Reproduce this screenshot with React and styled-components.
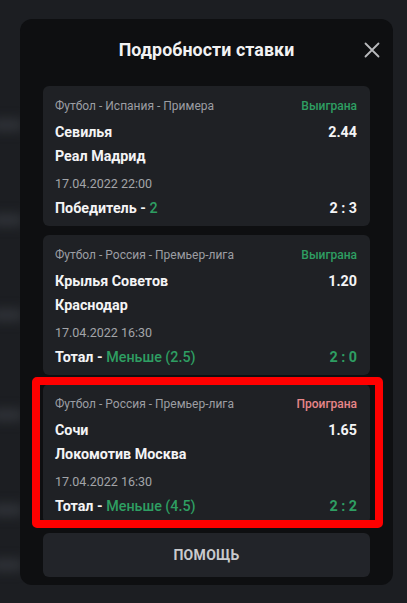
import React from "react";
import styled, { createGlobalStyle } from "styled-components";

const bets = [
  {
    league: "Футбол - Испания - Примера",
    status: "Выиграна",
    won: true,
    home: "Севилья",
    away: "Реал Мадрид",
    odds: "2.44",
    date: "17.04.2022 22:00",
    market: "Победитель",
    pick: "2",
    score: "2 : 3",
    scoreGreen: false,
  },
  {
    league: "Футбол - Россия - Премьер-лига",
    status: "Выиграна",
    won: true,
    home: "Крылья Советов",
    away: "Краснодар",
    odds: "1.20",
    date: "17.04.2022 16:30",
    market: "Тотал",
    pick: "Меньше (2.5)",
    score: "2 : 0",
    scoreGreen: true,
  },
  {
    league: "Футбол - Россия - Премьер-лига",
    status: "Проиграна",
    won: false,
    home: "Сочи",
    away: "Локомотив Москва",
    odds: "1.65",
    date: "17.04.2022 16:30",
    market: "Тотал",
    pick: "Меньше (4.5)",
    score: "2 : 2",
    scoreGreen: true,
    marked: true,
  },
];

const backdropRows = [120, 215, 310, 410, 505, 560];

function App() {
  return (
    <>
      <GlobalStyle />
      <Page>
        <Backdrop>
          {backdropRows.map((y) => (
            <Smudge key={y} style={{ top: y }} />
          ))}
        </Backdrop>
        <Modal>
          <Header>
            <Title>Подробности ставки</Title>
            <CloseButton aria-label="close">
              <svg width="16" height="16" viewBox="0 0 16 16">
                <path d="M1.5 1.5 L14.5 14.5 M14.5 1.5 L1.5 14.5" stroke="#b9babd" strokeWidth="1.8" strokeLinecap="round" />
              </svg>
            </CloseButton>
          </Header>
          <List>
            {bets.map((b, i) => (
              <Card key={i} $marked={b.marked}>
                <Row $h={26}>
                  <League>{b.league}</League>
                  <Status $won={b.won}>{b.status}</Status>
                </Row>
                <Row $h={26}>
                  <Strong>{b.home}</Strong>
                  <Strong>{b.odds}</Strong>
                </Row>
                <Row $h={22}>
                  <Strong>{b.away}</Strong>
                </Row>
                <Row $h={32}>
                  <DateText>{b.date}</DateText>
                </Row>
                <Row $h={18}>
                  <Strong>
                    {b.market} - <Green>{b.pick}</Green>
                  </Strong>
                  <Strong $green={b.scoreGreen}>{b.score}</Strong>
                </Row>
              </Card>
            ))}
            <HelpButton>ПОМОЩЬ</HelpButton>
          </List>
        </Modal>
      </Page>
    </>
  );
}

export default App;

const GlobalStyle = createGlobalStyle`
  html, body {
    margin: 0;
    padding: 0;
    background: #1c1e22;
  }
  body {
    font-family: Roboto, "Noto Sans", sans-serif;
    -webkit-font-smoothing: antialiased;
  }
`;

const Page = styled.div`
  position: relative;
  width: 407px;
  height: 603px;
  overflow: hidden;
  background: #1c1e22;
`;

const Backdrop = styled.div`
  position: absolute;
  inset: 0;
  filter: blur(6px);
`;

const Smudge = styled.div`
  position: absolute;
  left: -10px;
  width: 34px;
  height: 10px;
  border-radius: 5px;
  background: #34373d;
`;

const Modal = styled.div`
  position: absolute;
  top: 19px;
  left: 20px;
  width: 373px;
  height: 566px;
  box-sizing: border-box;
  background: #0e0f11;
  border-radius: 12px;
  padding: 0 23px 8px;
  display: flex;
  flex-direction: column;
`;

const Header = styled.div`
  position: relative;
  height: 68px;
  display: flex;
  align-items: center;
  justify-content: center;
  padding-bottom: 6px;
  box-sizing: border-box;
`;

const Title = styled.h2`
  margin: 0;
  color: #f2f2f3;
  font-size: 17.8px;
  font-weight: 700;
  letter-spacing: 0.1px;
`;

const CloseButton = styled.button`
  position: absolute;
  right: -14px;
  top: 19px;
  width: 24px;
  height: 24px;
  border: 0;
  padding: 0;
  background: none;
  display: flex;
  align-items: center;
  justify-content: center;
`;

const List = styled.div`
  display: flex;
  flex-direction: column;
  gap: 9px;
`;

const Card = styled.div`
  position: relative;
  background: #1f2125;
  border-radius: 6px;
  padding: 7px 13px 0 12px;
  height: 140px;
  box-sizing: border-box;
  display: flex;
  flex-direction: column;

  ${(p) =>
    p.$marked &&
    `
    &::after {
      content: "";
      position: absolute;
      top: -7px;
      left: -11px;
      right: -13px;
      bottom: -4px;
      border: 8px solid #ff0000;
      border-radius: 5px;
      pointer-events: none;
    }
  `}
`;

const Row = styled.div`
  display: flex;
  align-items: center;
  justify-content: space-between;
  height: ${(p) => p.$h}px;
`;

const League = styled.span`
  color: #9c9ea3;
  font-size: 12px;
`;

const Status = styled.span`
  color: ${(p) => (p.$won ? "#2e9e62" : "#e8868a")};
  font-size: 12px;
  font-weight: 500;
`;

const Strong = styled.span`
  color: ${(p) => (p.$green ? "#2e9e62" : "#f4f4f5")};
  font-size: 14.3px;
  font-weight: 700;
`;

const Green = styled.span`
  color: #2e9e62;
  font-weight: 500;
`;

const DateText = styled.span`
  color: #a3a5a9;
  font-size: 12.5px;
`;

const HelpButton = styled.button`
  height: 44px;
  border: 0;
  border-radius: 6px;
  background: #222429;
  color: #c9cacd;
  font-family: Roboto, sans-serif;
  font-size: 14px;
  font-weight: 700;
  letter-spacing: 0.3px;
`;
